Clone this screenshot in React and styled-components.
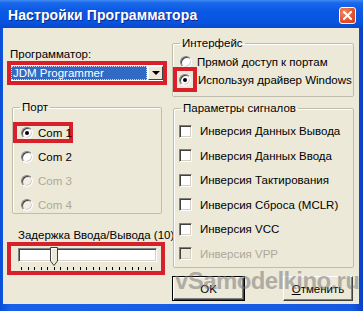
import styled, { createGlobalStyle } from "styled-components"

const GlobalStyle = createGlobalStyle`
  html, body {
    margin: 0;
    padding: 0;
    overflow: hidden;
    background: #0054e3;
  }
  * { box-sizing: border-box; }
`

const Window = styled.div`
  position: relative;
  width: 363px;
  height: 311px;
  display: flex;
  flex-direction: column;
  background: linear-gradient(90deg, #0b4fd8 0%, #1761e8 3%, #1659e0 97%, #0a3fc4 100%);
  padding: 0 4px 7px 3px;
  font-family: "Liberation Sans", Arial, sans-serif;
  font-size: 11.5px;
  color: #000;
`

const TitleBar = styled.div`
  height: 28px;
  margin: 0 -4px 0 -3px;
  padding: 0 7px 0 8px;
  display: flex;
  align-items: center;
  justify-content: space-between;
  background: linear-gradient(180deg, #3f8cf3 0%, #1a68ea 10%, #0a58e4 40%, #0754e0 80%, #0847c9 100%);
`

const Title = styled.span`
  color: #fff;
  font-weight: bold;
  font-size: 14px;
  letter-spacing: 0.1px;
  text-shadow: 1px 1px 0 #0a2a8c;
  padding-top: 2px;
`

const CloseBtn = styled.div`
  width: 17px;
  height: 17px;
  margin-top: 2px;
  border: 1px solid #fff;
  border-radius: 3px;
  background: radial-gradient(circle at 30% 30%, #f08a68, #e0522a 60%, #c8401d);
  display: flex;
  align-items: center;
  justify-content: center;
`

const Body = styled.div`
  flex: 1;
  background: #ece9d8;
  display: grid;
  grid-template-columns: 160px 182px;
  column-gap: 5px;
  padding-left: 4px;
  align-items: start;
`

const Column = styled.div`
  display: flex;
  flex-direction: column;
`

const Label = styled.div`
  line-height: ${p => p.$lh || 14}px;
  margin-top: ${p => p.$mt || 0}px;
  margin-left: ${p => p.$ml || 0}px;
  white-space: nowrap;
`

const RedFrame = styled.div`
  border: ${p => p.$bw || 4}px solid #d8202a;
  width: ${p => p.$w}px;
  height: ${p => p.$h}px;
  margin-top: ${p => p.$mt || 0}px;
  display: flex;
  flex-direction: ${p => (p.$col ? "column" : "row")};
  align-items: ${p => (p.$col ? "flex-start" : "center")};
  justify-content: ${p => (p.$center ? "center" : "flex-start")};
  flex-shrink: 0;
  white-space: nowrap;
`

const Combo = styled.div`
  flex: 1;
  height: 16px;
  background: #fff;
  display: flex;
  align-items: stretch;
  padding: 1px 0 1px 0;
`

const ComboText = styled.div`
  flex: 1;
  background: #316ac5;
  color: #fff;
  line-height: 14px;
  padding-left: 2px;
  outline: 1px dotted #c9d6ee;
  outline-offset: -1px;
`

const DropButton = styled.div`
  width: 15px;
  background: #ece9d8;
  border: 1px solid;
  border-color: #fff #404040 #404040 #fff;
  display: flex;
  align-items: center;
  justify-content: center;
  margin-left: 1px;
  &::after {
    content: "";
    border-left: 4px solid transparent;
    border-right: 4px solid transparent;
    border-top: 4px solid #000;
  }
`

const Group = styled.fieldset`
  margin: ${p => p.$mt || 0}px 0 0 ${p => p.$ml || 0}px;
  width: ${p => p.$w}px;
  padding: ${p => p.$pt || 0}px 0 ${p => p.$pb || 0}px 0;
  border: 1px solid #c0bdad;
  border-radius: 2px;
  box-shadow: inset 1px 1px 0 #fff;
  min-inline-size: 0;
`

const Legend = styled.legend`
  margin-left: 7px;
  padding: 0 2px;
  line-height: 14px;
  color: #000;
`

const Row = styled.div`
  display: flex;
  align-items: center;
  height: ${p => p.$h || 16}px;
  margin-top: ${p => p.$mt || 0}px;
  padding-left: ${p => p.$pl || 0}px;
  color: ${p => (p.$disabled ? "#aca899" : "#000")};
  white-space: nowrap;
`

const Radio = styled.span`
  width: 12px;
  height: 12px;
  border-radius: 50%;
  flex-shrink: 0;
  margin-left: ${p => p.$ml || 0}px;
  margin-right: ${p => p.$mr ?? 5}px;
  border: 1px solid;
  border-color: #808080 #fff #fff #808080;
  box-shadow: inset 1px 1px 0 #404040, inset -1px -1px 0 #d4d0c8;
  background: ${p => (p.$disabled ? "#f2f0e6" : "#fff")};
  display: flex;
  align-items: center;
  justify-content: center;
  &::after {
    content: "";
    width: 4px;
    height: 4px;
    border-radius: 50%;
    background: ${p => (p.$checked ? "#000" : "transparent")};
  }
`

const Check = styled.span`
  width: 13px;
  height: 13px;
  flex-shrink: 0;
  margin-right: 8px;
  border: 1px solid;
  border-color: #808080 #fff #fff #808080;
  box-shadow: inset 1px 1px 0 #404040, inset -1px -1px 0 #d4d0c8;
  background: ${p => (p.$disabled ? "#ece9d8" : "#fff")};
`

const Track = styled.div`
  position: relative;
  margin: 2px 0 0 7px;
  width: 139px;
  height: 14px;
  background: #fff;
  border: 1px solid;
  border-color: #808080 #fff #fff #808080;
  box-shadow: inset 1px 1px 0 #404040, inset -1px -1px 0 #d4d0c8;
`

const Thumb = styled.svg`
  position: absolute;
  left: 31px;
  top: -2px;
`

const Ticks = styled.div`
  display: flex;
  justify-content: space-between;
  width: 131px;
  margin: 5px 0 0 10px;
  span {
    width: 1px;
    height: 3px;
    background: #000;
  }
`

const ButtonRow = styled.div`
  display: flex;
  justify-content: space-between;
  margin-top: 8px;
  padding-right: 1px;
`

const Button = styled.div`
  width: ${p => p.$w}px;
  height: 25px;
  flex-shrink: 0;
  display: flex;
  align-items: center;
  justify-content: center;
  background: #ece9d8;
  border: 1px solid;
  border-color: ${p => (p.$default ? "#000" : "#fff #404040 #404040 #fff")};
  box-shadow: ${p =>
    p.$default
      ? "inset 1px 1px 0 #fff, inset -1px -1px 0 #404040, inset -2px -2px 0 #808080"
      : "inset -1px -1px 0 #808080"};
  u { text-decoration: underline; }
`

const Watermark = styled.div`
  position: absolute;
  left: 175px;
  top: 269px;
  font-family: "Liberation Sans", Arial, sans-serif;
  font-weight: bold;
  font-size: 24px;
  line-height: 24px;
  color: rgba(120, 120, 120, 0.55);
  letter-spacing: -0.6px;
  pointer-events: none;
  white-space: nowrap;
`

export default function App() {
  return (
    <>
      <GlobalStyle />
      <Window>
        <TitleBar>
          <Title>Настройки Программатора</Title>
          <CloseBtn>
            <svg width="9" height="9" viewBox="0 0 9 9">
              <path d="M1 1 L8 8 M8 1 L1 8" stroke="#fff" strokeWidth="2" strokeLinecap="square" />
            </svg>
          </CloseBtn>
        </TitleBar>
        <Body>
          <Column>
            <Label $mt={20} $lh={13} $ml={3}>Программатор:</Label>
            <RedFrame $w={160} $h={24}>
              <Combo>
                <ComboText>JDM Programmer</ComboText>
                <DropButton />
              </Combo>
            </RedFrame>
            <Group $mt={15} $ml={5} $w={150} $pt={8}>
              <Legend>Порт</Legend>
              <RedFrame $w={60} $h={21}>
                <Radio $checked $ml={4} $mr={5} />
                Com 1
              </RedFrame>
              <Row $mt={6} $pl={8}><Radio />Com 2</Row>
              <Row $mt={8} $pl={8} $disabled><Radio $disabled />Com 3</Row>
              <Row $mt={8} $pl={8} $disabled><Radio $disabled />Com 4</Row>
            </Group>
            <Label $mt={14} $ml={11}>Задержка Ввода/Вывода (10)</Label>
            <RedFrame $w={158} $h={33} $col>
              <Track>
                <Thumb width="8" height="19" viewBox="0 0 8 19">
                  <path d="M0.5 0.5 H7.5 V14 L4 18.5 L0.5 14 Z" fill="#ece9d8" stroke="#404040" strokeWidth="1" />
                  <path d="M1.5 14 V1.5 H6.5" fill="none" stroke="#fff" strokeWidth="1" />
                </Thumb>
              </Track>
              <Ticks>
                {Array.from({ length: 21 }).map((_, i) => <span key={i} />)}
              </Ticks>
            </RedFrame>
          </Column>
          <Column>
            <Group $mt={8} $w={182} $pb={4}>
              <Legend>Интерфейс</Legend>
              <Row $h={14} $mt={5} $pl={7}><Radio />Прямой доступ к портам</Row>
              <Row $h={25} $mt={-2}>
                <RedFrame $w={24} $h={25} $center>
                  <Radio $checked $mr={0} />
                </RedFrame>
                <span style={{ marginLeft: 1 }}>Используя драйвер Windows</span>
              </Row>
            </Group>
            <Group $mt={4} $ml={1} $w={181} $pt={4} $pb={1}>
              <Legend>Параметры сигналов</Legend>
              <Row $h={24.5} $pl={5}><Check />Инверсия Данных Вывода</Row>
              <Row $h={24.5} $pl={5}><Check />Инверсия Данных Ввода</Row>
              <Row $h={24.5} $pl={5}><Check />Инверсия Тактирования</Row>
              <Row $h={24.5} $pl={5}><Check />Инверсия Сброса (MCLR)</Row>
              <Row $h={24.5} $pl={5}><Check />Инверсия VCC</Row>
              <Row $h={24.5} $pl={5} $disabled><Check $disabled />Инверсия VPP</Row>
            </Group>
            <ButtonRow>
              <Button $w={73} $default>OK</Button>
              <Button $w={70}><span><u>О</u>тменить</span></Button>
            </ButtonRow>
          </Column>
        </Body>
        <Watermark>vSamodelkino.ru</Watermark>
      </Window>
    </>
  )
}
